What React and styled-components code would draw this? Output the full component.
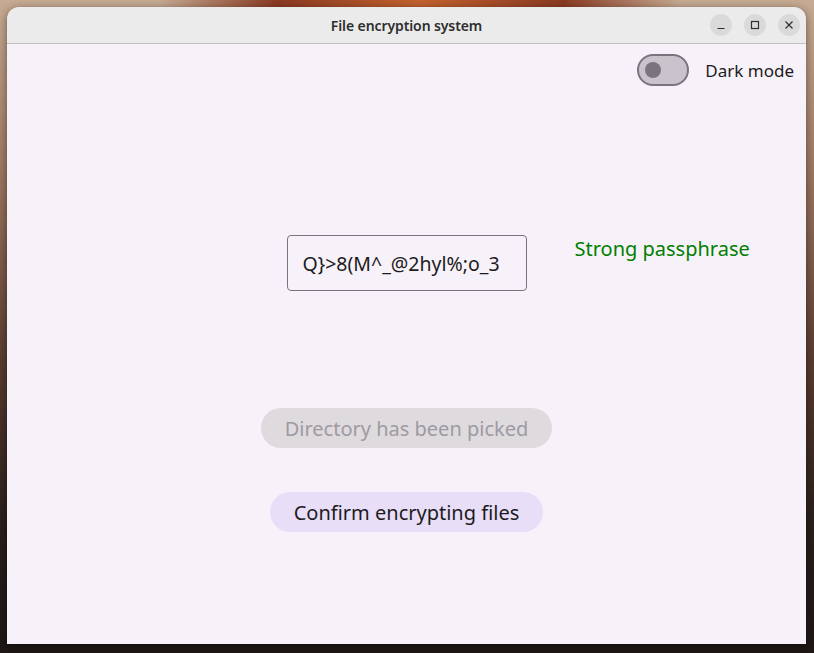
import React, { useState } from 'react';
import styled, { createGlobalStyle } from 'styled-components';

const GlobalStyle = createGlobalStyle`
  html, body {
    margin: 0;
    padding: 0;
  }
  body {
    font-family: 'Noto Sans', 'Open Sans', sans-serif;
  }
`

const Desktop = styled.div`
  width: 814px;
  height: 653px;
  box-sizing: border-box;
  padding: 7px 8px 9px 7px;
  background:
    radial-gradient(ellipse 260px 120px at 420px 0px, #c4622e 0%, #8a3a22 55%, rgba(0, 0, 0, 0) 100%),
    linear-gradient(180deg, #c6aa92 0%, #a07a64 25%, #5a3c30 55%, #2a1f1c 80%, #1e1716 100%);
`

const Window = styled.div`
  width: 799px;
  height: 637px;
  display: flex;
  flex-direction: column;
  border-radius: 12px 12px 0 0;
  overflow: hidden;
  box-shadow: 0 2px 8px rgba(0, 0, 0, 0.45);
`

const TitleBar = styled.div`
  height: 36px;
  flex: none;
  background: #ebebeb;
  border-bottom: 1px solid #c0c0c0;
  display: grid;
  grid-template-columns: 1fr auto 1fr;
  align-items: center;
`

const Title = styled.div`
  grid-column: 2;
  font-family: 'Noto Sans', sans-serif;
  font-weight: 600;
  font-size: 14px;
  color: #2e2e2e;
  letter-spacing: -0.1px;
`

const WindowControls = styled.div`
  justify-self: end;
  display: flex;
  gap: 12px;
  padding-right: 6px;
`

const ControlButton = styled.div`
  width: 22px;
  height: 22px;
  border-radius: 50%;
  background: #dadada;
  display: flex;
  align-items: center;
  justify-content: center;
`

const Content = styled.div`
  flex: 1;
  background: #f7f2f9;
  display: flex;
  flex-direction: column;
  align-items: center;
`

const TopRow = styled.div`
  align-self: stretch;
  display: flex;
  justify-content: flex-end;
  align-items: center;
  gap: 16px;
  padding: 10px 12px 0 0;
`

const SwitchTrack = styled.div`
  width: 52px;
  height: 32px;
  box-sizing: border-box;
  border-radius: 16px;
  border: 2px solid #79747e;
  background: #c9c3cc;
  display: flex;
  align-items: center;
  padding-left: ${p => (p.$on ? '22px' : '6px')};
`

const SwitchThumb = styled.div`
  width: 16px;
  height: 16px;
  border-radius: 50%;
  background: #79747e;
`

const Label = styled.span`
  font-size: 17px;
  color: #1d1b20;
`

const PassRow = styled.div`
  align-self: stretch;
  display: grid;
  grid-template-columns: 1fr 240px 1fr;
  align-items: center;
  margin-top: 149px;
`

const PassInput = styled.div`
  grid-column: 2;
  height: 56px;
  box-sizing: border-box;
  border: 1px solid #79747e;
  border-radius: 4px;
  display: flex;
  align-items: center;
  padding: 0 15px;
  font-size: 19.5px;
  color: #1d1b20;
  white-space: nowrap;
`

const Strength = styled.div`
  padding-left: 48px;
  margin-top: -30px;
  font-size: 20px;
  color: #008000;
`

const PillButton = styled.div`
  height: 40px;
  box-sizing: border-box;
  padding: 0 24px;
  border-radius: 20px;
  display: flex;
  align-items: center;
  font-size: 20px;
  margin-top: ${p => p.$top}px;
  background: ${p => (p.$disabled ? '#dedade' : '#e8def8')};
  color: ${p => (p.$disabled ? '#9e9aa2' : '#1d1b20')};
`

export default function App() {
  const [dark] = useState(false);
  return (
    <>
      <GlobalStyle />
      <Desktop>
        <Window>
          <TitleBar>
            <Title>File encryption system</Title>
            <WindowControls>
              <ControlButton>
                <svg width="10" height="10" viewBox="0 0 10 10">
                  <path d="M1.5 8.5h7" stroke="#2e2e2e" strokeWidth="1.2" />
                </svg>
              </ControlButton>
              <ControlButton>
                <svg width="10" height="10" viewBox="0 0 10 10">
                  <rect x="1.5" y="1.5" width="7" height="7" fill="none" stroke="#2e2e2e" strokeWidth="1.2" />
                </svg>
              </ControlButton>
              <ControlButton>
                <svg width="10" height="10" viewBox="0 0 10 10">
                  <path d="M1.5 1.5l7 7M8.5 1.5l-7 7" stroke="#2e2e2e" strokeWidth="1.2" />
                </svg>
              </ControlButton>
            </WindowControls>
          </TitleBar>
          <Content>
            <TopRow>
              <SwitchTrack $on={dark}>
                <SwitchThumb />
              </SwitchTrack>
              <Label>Dark mode</Label>
            </TopRow>
            <PassRow>
              <PassInput>Q{'}'}&gt;8(M^_@2hyl%;o_3</PassInput>
              <Strength>Strong passphrase</Strength>
            </PassRow>
            <PillButton $disabled $top={117}>Directory has been picked</PillButton>
            <PillButton $top={44}>Confirm encrypting files</PillButton>
          </Content>
        </Window>
      </Desktop>
    </>
  );
}
